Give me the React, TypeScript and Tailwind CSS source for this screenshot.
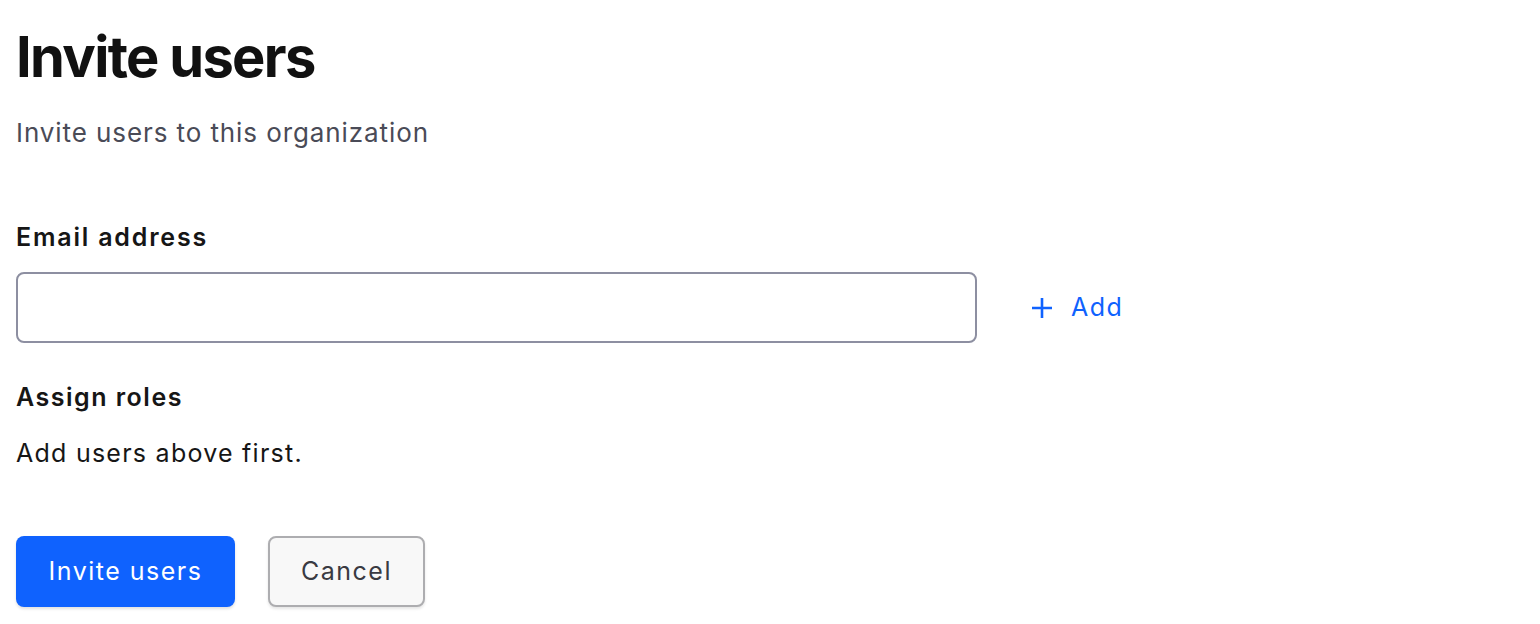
import React, { useState } from 'react';

export default function App() {
  const [email, setEmail] = useState('');

  return (
    <div className="min-h-screen bg-white px-4 pt-[29px] font-['Inter','Liberation_Sans',sans-serif]">
      <h1 className="text-[56px] leading-none font-bold tracking-[-0.03em] text-[#111111]">Invite users</h1>
      <p className="mt-[35px] text-[26px] leading-none tracking-[0.035em] text-[#4a4b57]">Invite users to this organization</p>

      <div className="mt-[79px]">
        <label className="block text-[25px] leading-none font-semibold tracking-[0.072em] text-[#161616]">Email address</label>
        <div className="mt-[22px] flex items-center">
          <input
            value={email}
            onChange={(e) => setEmail(e.target.value)}
            className="h-[71px] w-[961px] rounded-lg border-2 border-[#8d8fa1] bg-white px-4 text-[24px] outline-none"
          />
          <button className="ml-[55px] flex items-center gap-[19px] text-[25px] leading-none tracking-[0.06em] text-[#0f62fe]">
            <svg width="20" height="20" viewBox="0 0 20 20" fill="none" stroke="currentColor" strokeWidth="2.6">
              <path d="M10 0v20M0 10h20" />
            </svg>
            Add
          </button>
        </div>
      </div>

      <div className="mt-[42px]">
        <h2 className="text-[25px] leading-none font-semibold tracking-[0.06em] text-[#161616]">Assign roles</h2>
        <p className="mt-[31px] text-[25px] leading-none tracking-[0.05em] text-[#161616]">Add users above first.</p>
      </div>

      <div className="mt-[70px] flex gap-[33px]">
        <button className="h-[71px] w-[219px] rounded-lg bg-[#0f62fe] text-[25px] tracking-[0.06em] text-white shadow-[0_2px_3px_rgba(0,0,0,0.12)]">
          Invite users
        </button>
        <button className="h-[71px] w-[157px] rounded-lg border-2 border-[#adadb0] bg-[#f8f8f8] text-[25px] tracking-[0.06em] text-[#393a42] shadow-[0_2px_3px_rgba(0,0,0,0.1)]">
          Cancel
        </button>
      </div>
    </div>
  );
}
